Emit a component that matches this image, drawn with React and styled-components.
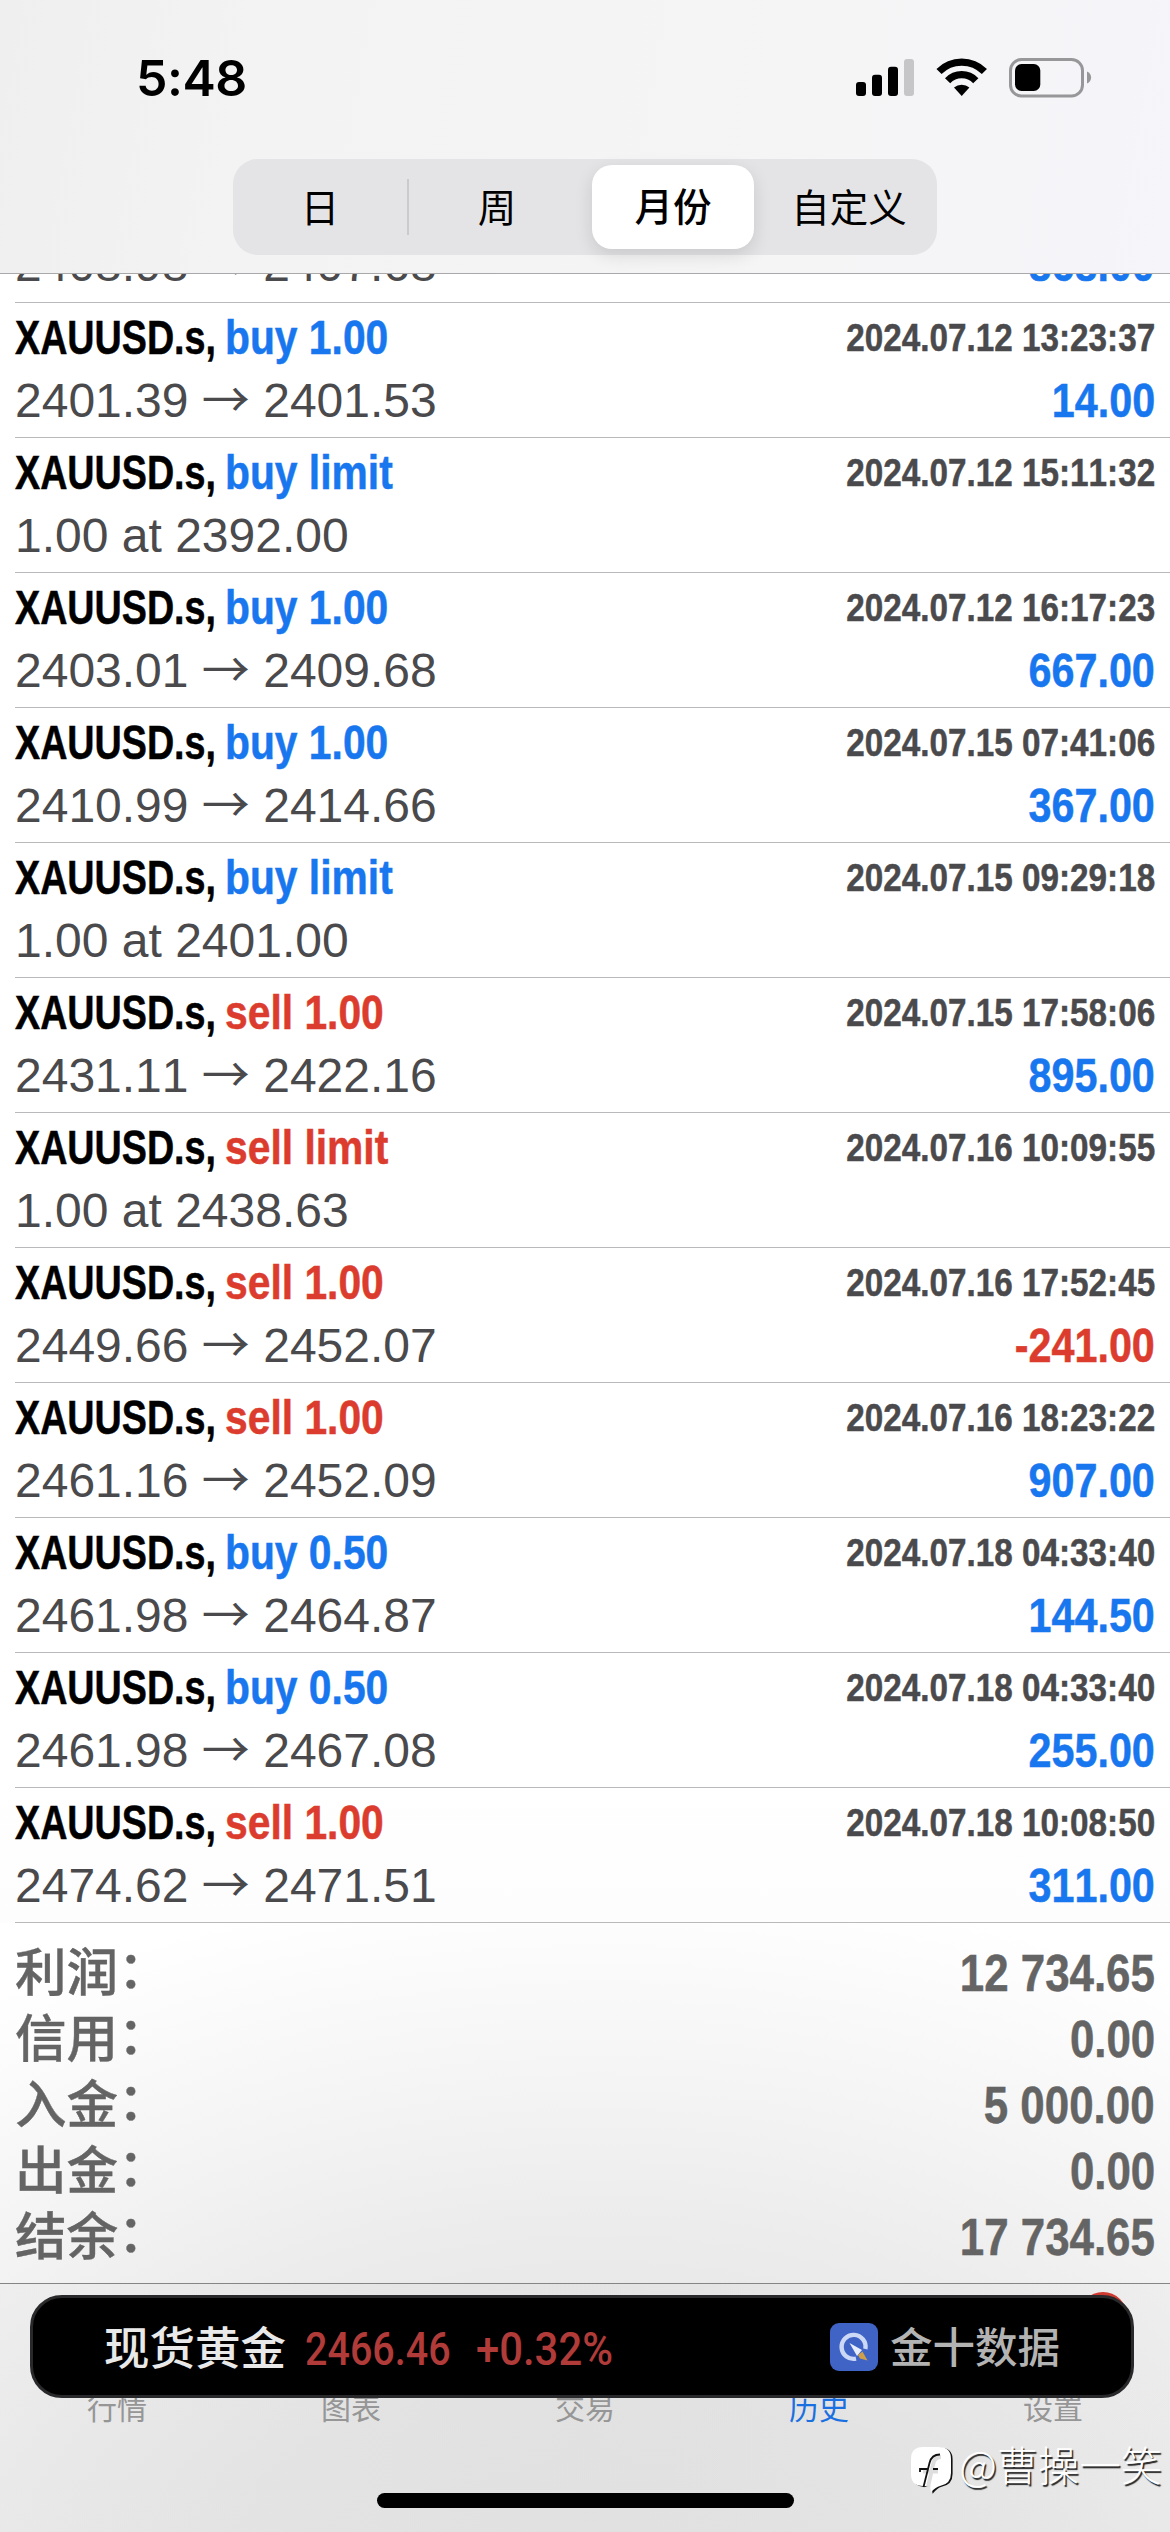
import React from "react";
import styled, { createGlobalStyle } from "styled-components";

const GlobalStyle = createGlobalStyle`
  body {
    margin: 0;
    background: #fff;
    font-family: 'Liberation Sans', 'Noto Sans CJK SC', sans-serif;
    font-kerning: none;
  }
`;

const colors = {
  buy: "#1877ee",
  sell: "#dc3c2e",
  text: "#4a4a4d",
  total: "#646464",
};

const Pantalla = styled.div`
  width: 1170px;
  height: 2532px;
  display: flex;
  flex-direction: column;
  overflow: hidden;
  background: radial-gradient(
    ellipse 1150px 760px at 600px 2640px,
    #e4e4e4 0%,
    #e6e6e6 35%,
    #ececec 55%,
    #f6f6f6 78%,
    #fdfdfd 95%,
    #fff 100%
  );
`;

const Header = styled.header`
  height: 273px;
  flex-shrink: 0;
  display: flex;
  flex-direction: column;
  align-items: center;
  border-bottom: 1px solid #a9a9ab;
  background: linear-gradient(100deg, #efeff0 0%, #f3f3f3 22%, #f5f5f6 70%, #f5f5fa 100%);
`;

const StatusBar = styled.div`
  width: 100%;
  height: 159px;
  box-sizing: border-box;
  padding: 0 78px 3px 136px;
  display: flex;
  align-items: center;
  justify-content: space-between;
`;

const Hora = styled.div`
  font: 600 50px Inter, sans-serif;
  letter-spacing: -0.5px;
  color: #000;
`;

const Segmentos = styled.nav`
  width: 704px;
  height: 96px;
  border-radius: 25px;
  background: #e4e4e6;
  display: grid;
  grid-template-columns: repeat(4, 1fr);
  align-items: center;
`;

const Segmento = styled.div`
  height: ${(p) => (p.$active ? 84 : 56)}px;
  margin: ${(p) => (p.$active ? "0 7px" : "0")};
  padding-bottom: ${(p) => (p.$active ? 6 : 5)}px;
  box-sizing: border-box;
  display: flex;
  align-items: center;
  justify-content: center;
  border-radius: ${(p) => (p.$active ? "20px" : "0")};
  border-right: ${(p) => (p.$divider ? "2px solid #cbcbce" : "0")};
  background: ${(p) => (p.$active ? "#fff" : "transparent")};
  box-shadow: ${(p) => (p.$active ? "0 6px 18px rgba(0, 0, 0, 0.12)" : "none")};
  font: ${(p) => (p.$active ? 500 : 400)} 38.5px/50px 'Noto Sans CJK SC', sans-serif;
  color: #000;
`;

const Lista = styled.main`
  flex: 1;
  min-height: 0;
  overflow: hidden;
`;

/* the list is scrolled: only the end of its first row shows under the header */
const Filas = styled.div`
  margin-top: -36px;
  padding-left: 15px;
  background: linear-gradient(#fff 90%, #fdfdfd 100%);
`;

const Fila = styled.div`
  height: ${(p) => (p.$partial ? 65 : 135)}px;
  box-sizing: border-box;
  padding: ${(p) => (p.$partial ? 0 : 3)}px 15px 0 0;
  border-bottom: 1px solid #b9b9bb;
`;

const Linea = styled.div`
  height: 63px;
  display: flex;
  align-items: center;
  justify-content: space-between;

  ${Fila} > &:only-child {
    height: 53px;
  }
`;

const Titulo = styled.div`
  display: flex;
`;

const Condensed = styled.span`
  display: inline-block;
  width: ${(p) => (p.$width ? `${p.$width}px` : "auto")};
  white-space: nowrap;
  font-size: ${(p) => p.$size || 48}px;
  font-weight: 700;
  color: ${(p) => p.$color || "#000"};
  -webkit-text-stroke: 0.5px currentColor;
  transform: scaleX(${(p) => p.$scale || 0.86});
  transform-origin: ${(p) => (p.$right ? "right" : "left")} center;
`;

const Precio = styled.span`
  font-size: 48px;
  line-height: 56px;
  white-space: pre;
  color: ${colors.text};
`;

const Flecha = styled.span`
  font-family: 'Noto Sans CJK SC', sans-serif;
  line-height: 1;
`;

const Resumen = styled.section`
  padding: 17px 15px 0;
`;

const Total = styled.div`
  height: 66px;
  display: flex;
  align-items: center;
  justify-content: space-between;
`;

const Etiqueta = styled.span`
  padding-bottom: 8px;
  font: 500 51.5px/58px 'Noto Sans CJK SC', sans-serif;
  color: ${colors.total};
  -webkit-text-stroke: 0.4px currentColor;
`;

/* the colon sits a little above the baseline, centred on the characters */
const DosPuntos = styled.span`
  display: inline-block;
  transform: translate(0, -3px);
`;

const Footer = styled.footer`
  position: relative;
  height: 249px;
  flex-shrink: 0;
  box-sizing: border-box;
  border-top: 1px solid #858585;
  background: linear-gradient(90deg, rgba(225, 225, 225, 0.25), rgba(215, 215, 215, 0.3) 50%, rgba(225, 225, 225, 0.2));
  display: flex;
  flex-direction: column;
`;

const Tabs = styled.div`
  margin-top: 100px;
  display: grid;
  grid-template-columns: repeat(5, 234px);
`;

const Tab = styled.div`
  text-align: center;
  font: 400 30px/44px 'Noto Sans CJK SC', sans-serif;
  color: ${(p) => (p.$active ? "#1a70e0" : "#969696")};
`;

const HomeBar = styled.div`
  width: 417px;
  height: 15px;
  margin: 65px auto 0;
  border-radius: 8px;
  background: #000;
`;

const Badge = styled.div`
  position: absolute;
  left: 1079px;
  top: 8px;
  width: 48px;
  height: 48px;
  border-radius: 50%;
  background: #cf3a30;
`;

const Ticker = styled.div`
  position: absolute;
  left: 30px;
  top: 11px;
  width: 1104px;
  height: 103px;
  box-sizing: border-box;
  padding: 0 71px;
  display: flex;
  align-items: center;
  border: 3px solid #29292b;
  border-radius: 32px;
  background: #000;
`;

const TickerNombre = styled.span`
  width: 201px;
  padding-bottom: 3px;
  font: 500 45.5px 'Noto Sans CJK SC', sans-serif;
  color: #e9e9e9;
`;

const TickerValor = styled.span`
  width: ${(p) => p.$width}px;
  padding-top: 4px;
  font: 500 47px Roboto, sans-serif;
  color: #b03b39;
  transform: scaleX(${(p) => p.$scale});
  transform-origin: left center;
  white-space: nowrap;
`;

const Marca = styled.div`
  margin-left: auto;
  display: flex;
  align-items: center;
  gap: 12px;
`;

const MarcaNombre = styled.span`
  padding-bottom: 5px;
  font: 500 42.5px 'Noto Sans CJK SC', sans-serif;
  color: #b3b3b3;
`;

const Firma = styled.div`
  position: absolute;
  right: 8px;
  top: 146px;
  display: flex;
  align-items: center;
  gap: 5px;
  font: 300 41.3px/60px 'Noto Sans CJK SC', sans-serif;
  color: #fff;
  text-shadow: 1.5px 1.5px 1px #222;

  svg {
    margin-top: 17px;
  }
`;

const trades = [
  { type: "buy", from: "2408.98", to: "2407.68", profit: "868.00" },
  { type: "buy", op: "buy 1.00", date: "2024.07.12 13:23:37", from: "2401.39", to: "2401.53", profit: "14.00" },
  { type: "buy", op: "buy limit", date: "2024.07.12 15:11:32", pending: "1.00 at 2392.00" },
  { type: "buy", op: "buy 1.00", date: "2024.07.12 16:17:23", from: "2403.01", to: "2409.68", profit: "667.00" },
  { type: "buy", op: "buy 1.00", date: "2024.07.15 07:41:06", from: "2410.99", to: "2414.66", profit: "367.00" },
  { type: "buy", op: "buy limit", date: "2024.07.15 09:29:18", pending: "1.00 at 2401.00" },
  { type: "sell", op: "sell 1.00", date: "2024.07.15 17:58:06", from: "2431.11", to: "2422.16", profit: "895.00" },
  { type: "sell", op: "sell limit", date: "2024.07.16 10:09:55", pending: "1.00 at 2438.63" },
  { type: "sell", op: "sell 1.00", date: "2024.07.16 17:52:45", from: "2449.66", to: "2452.07", profit: "-241.00" },
  { type: "sell", op: "sell 1.00", date: "2024.07.16 18:23:22", from: "2461.16", to: "2452.09", profit: "907.00" },
  { type: "buy", op: "buy 0.50", date: "2024.07.18 04:33:40", from: "2461.98", to: "2464.87", profit: "144.50" },
  { type: "buy", op: "buy 0.50", date: "2024.07.18 04:33:40", from: "2461.98", to: "2467.08", profit: "255.00" },
  { type: "sell", op: "sell 1.00", date: "2024.07.18 10:08:50", from: "2474.62", to: "2471.51", profit: "311.00" },
];

const totals = [
  ["利润", "12 734.65"],
  ["信用", "0.00"],
  ["入金", "5 000.00"],
  ["出金", "0.00"],
  ["结余", "17 734.65"],
];

const tabs = ["行情", "图表", "交易", "历史", "设置"];

const StatusIcons = () => (
  <svg width="236" height="40" viewBox="856 58 236 40">
    <rect x="856" y="82" width="10" height="14" rx="3" />
    <rect x="872" y="74.7" width="10" height="21.3" rx="3" />
    <rect x="888" y="66.7" width="10" height="29.3" rx="3" />
    <rect x="904" y="59" width="10" height="37" rx="3" fill="#c6c6c8" />
    <g fill="none" stroke="#000" strokeWidth="7.2">
      <path d="M939 71.5 A32 32 0 0 1 984.4 71.5" />
      <path d="M947.6 80.7 A19.5 19.5 0 0 1 975.8 80.7" />
    </g>
    <path d="M954 87.6 A11.5 11.5 0 0 1 969.4 87.6 L961.7 96 Z" />
    <rect x="1010.5" y="59.5" width="72" height="36.5" rx="11" fill="none" stroke="#979799" strokeWidth="3" />
    <rect x="1015" y="64" width="25.3" height="27" rx="6.5" />
    <path d="M1087 71.5 C1092.5 73.5 1092.5 81.5 1087 83.5 Z" fill="#979799" />
  </svg>
);

const LogoJin = () => (
  <svg width="48" height="48" viewBox="0 0 48 48">
    <rect width="48" height="48" rx="9" fill="#4064c6" />
    <path d="M26 35.6 A12 12 0 1 1 35.4 26" fill="none" stroke="#cbd8f6" strokeWidth="4.4" />
    <path d="M19.5 20 L32 27 L27 33 Z" fill="#e6edfc" />
    <path d="M28 32 L32.5 28.5 L37.5 37.5 L30 35.5 Z" fill="#cfa049" />
  </svg>
);

const FirmaIcon = () => (
  <svg width="43" height="48" viewBox="0 0 43 48">
    <path
      d="M12 0 H28 Q40 0 40 12 V26 Q40 37 29 39 Q25 40 20 46 L19 39 H12 Q0 39 0 27 V12 Q0 0 12 0 Z"
      fill="#111"
      transform="translate(1.6 0.8)"
    />
    <path d="M12 0 H28 Q40 0 40 12 V26 Q40 37 29 39 Q25 40 20 45 L19 39 H12 Q0 39 0 27 V12 Q0 0 12 0 Z" fill="#fff" />
    <path d="M17 40 L22 18 Q23 10 30 10 M12 24.5 H27" fill="none" stroke="#dedede" strokeWidth="4" />
    <path d="M12.5 40 L18.5 16 Q20.5 7.5 29 7.5 M9 25 V22 H17 M22 22 H27" fill="none" stroke="#111" strokeWidth="1.8" />
  </svg>
);

const Operacion = ({ trade }) => {
  const { type, op, date, from, to, profit, pending } = trade;

  return (
    <Fila $partial={!op}>
      {op && (
        <Linea>
          <Titulo>
            <Condensed $width={210} $scale={0.785}>XAUUSD.s,</Condensed>
            <Condensed $color={colors[type]} $scale={0.85}>{op}</Condensed>
          </Titulo>
          <Condensed $right $size={39} $scale={0.853} $color={colors.text}>{date}</Condensed>
        </Linea>
      )}
      <Linea>
        {pending ? (
          <Precio>{pending}</Precio>
        ) : (
          <Precio>
            {from} <Flecha>→</Flecha> {to}
          </Precio>
        )}
        {profit && (
          <Condensed $right $color={profit.startsWith("-") ? colors.sell : colors.buy}>{profit}</Condensed>
        )}
      </Linea>
    </Fila>
  );
};

const App = () => {
  return (
    <Pantalla>
      <GlobalStyle />
      <Header>
        <StatusBar>
          <Hora>5:48</Hora>
          <StatusIcons />
        </StatusBar>
        <Segmentos>
          <Segmento $divider>日</Segmento>
          <Segmento>周</Segmento>
          <Segmento $active>月份</Segmento>
          <Segmento>自定义</Segmento>
        </Segmentos>
      </Header>

      <Lista>
        <Filas>
          {trades.map((trade, i) => (
            <Operacion key={i} trade={trade} />
          ))}
        </Filas>
        <Resumen>
          {totals.map(([label, value]) => (
            <Total key={label}>
              <Etiqueta>
                {label}
                <DosPuntos>：</DosPuntos>
              </Etiqueta>
              <Condensed $right $size={51} $scale={0.86} $color={colors.total}>{value}</Condensed>
            </Total>
          ))}
        </Resumen>
      </Lista>

      <Footer>
        <Tabs>
          {tabs.map((tab) => (
            <Tab key={tab} $active={tab === "历史"}>{tab}</Tab>
          ))}
        </Tabs>
        <HomeBar />
        <Badge />
        <Ticker>
          <TickerNombre>现货黄金</TickerNombre>
          <TickerValor $width={171} $scale={0.84}>2466.46</TickerValor>
          <TickerValor $width={140} $scale={0.89}>+0.32%</TickerValor>
          <Marca>
            <LogoJin />
            <MarcaNombre>金十数据</MarcaNombre>
          </Marca>
        </Ticker>
        <Firma>
          <FirmaIcon />
          @曹操一笑
        </Firma>
      </Footer>
    </Pantalla>
  );
};

export default App;
